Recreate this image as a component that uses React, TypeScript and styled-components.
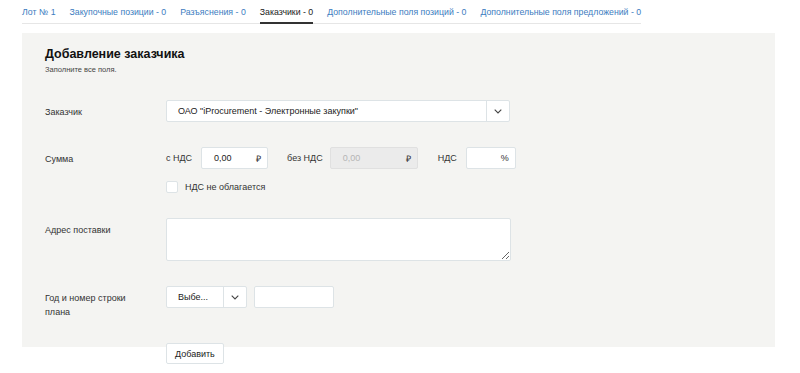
import styled, { createGlobalStyle } from 'styled-components'

const GlobalStyle = createGlobalStyle`
    body {
        margin: 0;
        background: #fff;
        font-family: "Liberation Sans", Arial, sans-serif;
        color: #333;
    }
`;

const tabs = [
    { title: 'Лот № 1' },
    { title: 'Закупочные позиции - 0' },
    { title: 'Разъяснения - 0' },
    { title: 'Заказчики - 0', active: true },
    { title: 'Дополнительные поля позиций - 0' },
    { title: 'Дополнительные поля предложений - 0' },
]

const Chevron = () => (
    <svg width="8" height="5" viewBox="0 0 8 5" fill="none">
        <path d="M0.7 0.7 L4 4 L7.3 0.7" stroke="#444" strokeWidth="1.1" />
    </svg>
)

const App = () => {
    return (
        <Page>
            <GlobalStyle />
            <TabBar>
                {tabs.map(tab => (
                    <Tab key={tab.title} $active={!!tab.active}>{tab.title}</Tab>
                ))}
            </TabBar>
            <Panel>
                <Title>Добавление заказчика</Title>
                <Hint>Заполните все поля.</Hint>
                <Form>
                    <Label>Заказчик</Label>
                    <Select $width={344}>
                        <SelectValue>ОАО "iProcurement - Электронные закупки"</SelectValue>
                        <SelectButton><Chevron /></SelectButton>
                    </Select>

                    <Label>Сумма</Label>
                    <SumBlock>
                        <SumRow>
                            <Caption>с НДС</Caption>
                            <Field $width={67}>
                                <span>0,00</span>
                                <Suffix>₽</Suffix>
                            </Field>
                            <Caption $gap={19} $after={7}>без НДС</Caption>
                            <Field $width={88} $disabled>
                                <span>0,00</span>
                                <Suffix>₽</Suffix>
                            </Field>
                            <Caption $gap={20}>НДС</Caption>
                            <Field $width={50}>
                                <span></span>
                                <Suffix>%</Suffix>
                            </Field>
                        </SumRow>
                        <CheckRow>
                            <CheckBox />
                            <span>НДС не облагается</span>
                        </CheckRow>
                    </SumBlock>

                    <Label>Адрес поставки</Label>
                    <TextArea />

                    <Label>Год и номер строки<br />плана</Label>
                    <PlanRow>
                        <Select $width={81}>
                            <SelectValue>Выбе...</SelectValue>
                            <SelectButton><Chevron /></SelectButton>
                        </Select>
                        <Field $width={80} />
                    </PlanRow>
                </Form>
            </Panel>
            <Actions>
                <Button>Добавить</Button>
            </Actions>
        </Page>
    )
}

export default App


const Page = styled.div`
    padding: 0 25px 0 22px;
    font-size: 9px;
`;

const TabBar = styled.div`
    display: flex;
    gap: 14px;
    width: 619px;
    height: 24px;
    border-bottom: 1px solid #e6e6e6;
    box-sizing: border-box;
`;

const Tab = styled.div<{ $active: boolean }>`
    padding-top: 7px;
    height: 24px;
    box-sizing: border-box;
    font-size: 8.75px;
    white-space: nowrap;
    color: ${p => p.$active ? '#222' : '#3c7cc0'};
    border-bottom: ${p => p.$active ? '2px solid #333' : 'none'};
    margin-bottom: -1px;
`;

const Panel = styled.div`
    margin-top: 9px;
    background: #f4f4f2;
    padding: 12px 23px 28px;
`;

const Title = styled.h2`
    margin: 0;
    font-size: 12.5px;
    font-weight: 700;
    color: #111;
    line-height: 18px;
`;

const Hint = styled.div`
    font-size: 7.5px;
    color: #444;
    line-height: 10px;
    margin-top: 2px;
`;

const Form = styled.div`
    display: grid;
    grid-template-columns: 121px 1fr;
    row-gap: 25px;
    margin-top: 25px;
    align-items: start;
`;

const Label = styled.div`
    padding-top: 5px;
    line-height: 14px;
    font-size: 9px;
    color: #333;
`;

const Select = styled.div<{ $width: number }>`
    display: flex;
    width: ${p => p.$width}px;
    height: 22px;
    box-sizing: border-box;
    background: #fff;
    border: 1px solid #dde3e6;
    border-radius: 2px;
`;

const SelectValue = styled.div`
    flex: 1;
    display: flex;
    align-items: center;
    padding-left: 11px;
    font-size: 9px;
    color: #222;
    white-space: nowrap;
    overflow: hidden;
`;

const SelectButton = styled.div`
    width: 22px;
    display: flex;
    align-items: center;
    justify-content: center;
    border-left: 1px solid #dde3e6;
`;

const SumBlock = styled.div`
    display: flex;
    flex-direction: column;
    gap: 12px;
`;

const SumRow = styled.div`
    display: flex;
    align-items: center;
`;

const Caption = styled.span<{ $gap?: number, $after?: number }>`
    margin-left: ${p => p.$gap || 0}px;
    margin-right: ${p => p.$after || 9}px;
    font-size: 9px;
    color: #333;
`;

const Field = styled.div<{ $width: number, $disabled?: boolean }>`
    display: flex;
    align-items: center;
    justify-content: space-between;
    width: ${p => p.$width}px;
    height: 22px;
    box-sizing: border-box;
    padding: 0 6px 0 12px;
    background: ${p => p.$disabled ? '#ebebeb' : '#fff'};
    border: 1px solid ${p => p.$disabled ? '#e0e0e0' : '#dde3e6'};
    border-radius: 2px;
    font-size: 9px;
    color: ${p => p.$disabled ? '#b5b5b5' : '#222'};
`;

const Suffix = styled.span`
    color: #333;
    font-size: 9px;
`;

const CheckRow = styled.label`
    display: flex;
    align-items: center;
    gap: 7px;
    font-size: 9px;
    color: #333;
`;

const CheckBox = styled.span`
    width: 12px;
    height: 12px;
    box-sizing: border-box;
    background: #fff;
    border: 1px solid #dde3e6;
    border-radius: 2px;
`;

const TextArea = styled.textarea`
    width: 345px;
    height: 43px;
    box-sizing: border-box;
    border: 1px solid #dde3e6;
    border-radius: 2px;
    background: #fff;
    resize: both;
    outline: none;
`;

const PlanRow = styled.div`
    display: flex;
    gap: 7px;
`;

const Actions = styled.div`
    margin-top: -4px;
    padding-left: 144px;
`;

const Button = styled.button`
    height: 21px;
    padding: 0 8px;
    background: #fff;
    border: 1px solid #dde3e6;
    border-radius: 2px;
    font-family: "Liberation Sans", Arial, sans-serif;
    font-size: 9px;
    color: #222;
`;
